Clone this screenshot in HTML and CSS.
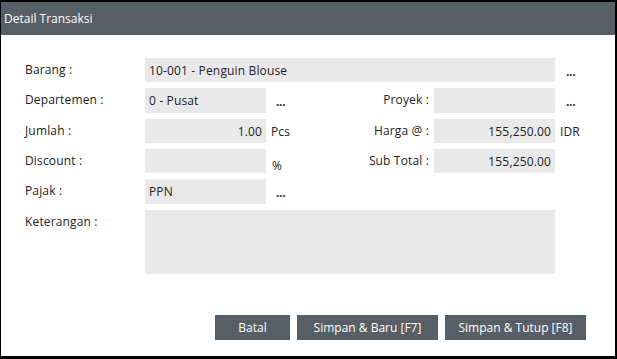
FILE: index.html
```html
<!DOCTYPE html>
<html>
<head>
<meta charset="utf-8">
<link rel="stylesheet" href="styles.css">
</head>
<body>
<div class="dialog">
  <div class="header">Detail Transaksi</div>
  <div class="content">
    <div class="form">
      <div class="label r1">Barang :</div>
      <div class="input wide r1">10-001 - Penguin Blouse</div>
      <div class="trail r1"><span class="dots">...</span></div>

      <div class="label r2">Departemen :</div>
      <div class="input r2">0 - Pusat</div>
      <div class="mid r2"><span class="dots">...</span><span class="rlabel">Proyek :</span></div>
      <div class="input r2"></div>
      <div class="trail r2"><span class="dots">...</span></div>

      <div class="label r3">Jumlah :</div>
      <div class="input num r3">1.00</div>
      <div class="mid r3"><span class="unit">Pcs</span><span class="rlabel">Harga @ :</span></div>
      <div class="input num r3">155,250.00</div>
      <div class="trail r3"><span class="unit2">IDR</span></div>

      <div class="label r4">Discount :</div>
      <div class="input r4"></div>
      <div class="mid r4"><span class="unit pct">%</span><span class="rlabel">Sub Total :</span></div>
      <div class="input num r4">155,250.00</div>
      <div class="trail r4"></div>

      <div class="label r5">Pajak :</div>
      <div class="input r5">PPN</div>
      <div class="mid r5"><span class="dots">...</span><span class="rlabel"></span></div>
      <div class="blank r5"></div>
      <div class="trail r5"></div>

      <div class="label r6">Keterangan :</div>
      <div class="input wide area r6"></div>
      <div class="trail r6"></div>
    </div>
    <div class="buttons">
      <button class="btn btn-batal">Batal</button>
      <button class="btn btn-wide">Simpan &amp; Baru [F7]</button>
      <button class="btn btn-wide">Simpan &amp; Tutup [F8]</button>
    </div>
  </div>
</div>
</body>
</html>
```
FILE: styles.css
```css
* { box-sizing: border-box; }
html, body { margin: 0; padding: 0; background: #fff; }
body {
  font-family: "Open Sans", "Noto Sans", sans-serif;
  font-size: 12px;
  letter-spacing: 0.15px;
  color: #222;
}
.dialog {
  width: 617px;
  height: 359px;
  border-style: solid;
  border-color: #000;
  border-width: 2px 2px 3px 1px;
  display: flex;
  flex-direction: column;
  background: #fff;
}
.header {
  height: 33px;
  background: #585e66;
  color: #fff;
  font-size: 12px;
  padding: 8px 0 0 3px;
  letter-spacing: 0;
}
.content {
  flex: 1;
  display: flex;
  flex-direction: column;
  padding: 23px 0 0 24px;
}
.form {
  display: grid;
  grid-template-columns: 120px 121px 168px 121px auto;
  grid-template-rows: 24px 25px 24px 24px 25px 64px;
  row-gap: 6px;
}
.label {
  padding-top: 3px;
  white-space: nowrap;
}
.input {
  background: #e9e9e9;
  padding: 4px 4px 0 4px;
  white-space: nowrap;
  overflow: hidden;
}
.input.num { text-align: right; }
.input.wide { grid-column: 2 / 5; }
.mid {
  display: flex;
  justify-content: space-between;
  white-space: nowrap;
}
.rlabel {
  padding: 3px 5px 0 0;
}
.dots {
  display: block;
  padding: 5px 0 0 10px;
  font-size: 12px;
  font-weight: 700;
  letter-spacing: -0.3px;
  color: #333;
}
.trail .dots { padding-left: 11px; }
.unit { padding: 4px 0 0 5px; }
.unit.pct { padding-top: 8px; padding-left: 6px; }
.unit2 { display: block; padding: 4px 0 0 5px; }
.buttons {
  display: flex;
  justify-content: flex-end;
  gap: 7px;
  margin-top: 41px;
  padding-right: 29px;
}
.btn {
  height: 25px;
  border: none;
  background: #585e66;
  color: #fff;
  font-family: "Open Sans", "Noto Sans", sans-serif;
  font-size: 12px;
  padding: 0;
}
.btn-batal { width: 75px; }
.btn-wide { width: 141px; }
```
